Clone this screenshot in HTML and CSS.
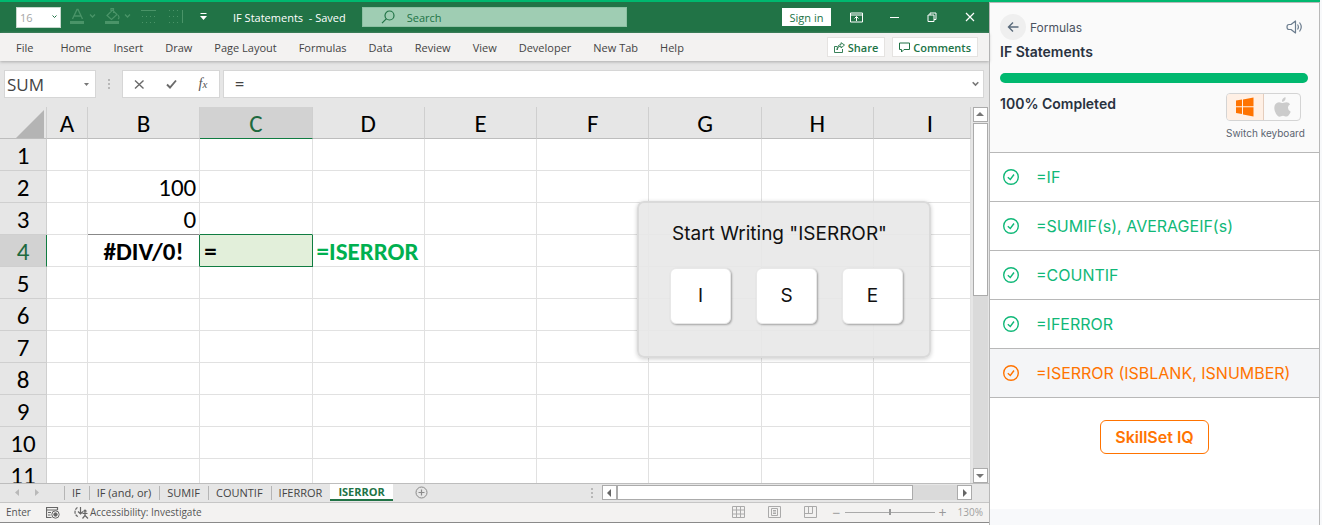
FILE: index.html
```html
<!DOCTYPE html>
<html lang="en">
<head>
<meta charset="utf-8">
<title>IF Statements</title>
<link rel="stylesheet" href="styles.css">
</head>
<body>
<div class="page">
<main class="excel">
  <header class="titlebar">
    <select class="font-size" aria-label="Font size"><option>16</option></select>
    <svg class="quick-tools" width="164" height="20" viewBox="0 0 164 20" fill="none" stroke="#4a9468" aria-hidden="true">
      <path d="M3.500 12 8 2.500h1L13.500 12M5.500 9h6M21 7.500l2.500 2.500L26 7.500M56 7.500l2.500 2.500L61 7.500" stroke-width="1.300"/>
      <path d="M1 15.500h14M36 15.500h14" stroke-width="3"/>
      <path d="M38 8.500 43.500 3 48 7.500 42.500 12.500zM42 5V1.500h2.500V6M49 8q2 3 0 4" stroke-width="1.200"/>
      <path d="M72 3.500h15"/>
      <path d="M73 9.500h14M73 15.500h14M100 3.500h12M100 9.500h12M100 15.500h12" stroke-dasharray="1 3"/>
      <path d="M113.500 3v13"/>
      <path d="M131.500 6.500h6" stroke="#fff"/><path d="M131 9h7l-3.500 4z" fill="#fff" stroke="none"/>
    </svg>
    <h1 class="doc-title">IF Statements&nbsp; - Saved</h1>
    <label class="search">
      <svg width="14" height="14" viewBox="0 0 14 14" fill="none" stroke="#217346" stroke-width="1.200"><circle cx="8.500" cy="5.500" r="4.500"/><path d="M5.500 8.700 1 13.200"/></svg>
      <input type="search" placeholder="Search" aria-label="Search">
    </label>
    <div class="window-tools">
      <button class="sign-in">Sign in</button>
      <button class="win-btn" aria-label="Ribbon display"><svg width="13" height="11" viewBox="0 0 13 11" fill="none" stroke="#fff"><path d="M.5 1h12v9H.5zM.5 3h12M6.500 9V4.500M4.500 6.500l2-2 2 2"/></svg></button>
      <button class="win-btn" aria-label="Minimize"><svg width="11" height="11" viewBox="0 0 11 11" stroke="#fff"><path d="M1 5.500h9"/></svg></button>
      <button class="win-btn" aria-label="Restore"><svg width="10" height="10" viewBox="0 0 10 10" fill="none" stroke="#fff"><path d="M1 3h6v6.500H1zM3 3V1h6v6.500H7"/></svg></button>
      <button class="win-btn" aria-label="Close"><svg width="10" height="10" viewBox="0 0 10 10" stroke="#fff" stroke-width="1.200"><path d="M1 1l8 8M9 1 1 9"/></svg></button>
    </div>
  </header>

  <nav class="ribbon">
    <button class="file">File</button><button>Home</button><button>Insert</button><button>Draw</button><button>Page Layout</button><button>Formulas</button><button>Data</button><button>Review</button><button>View</button><button>Developer</button><button>New Tab</button><button>Help</button>
    <div class="ribbon-actions">
      <button class="action"><svg width="11" height="11" viewBox="0 0 11 11" fill="none" stroke="#217346"><path d="M3 4.500H.5v6h8V7M3 8q.5-4 4-4V6l3.500-3L7 .7V2.500Q3 3 3 8z" stroke-width=".9"/></svg>Share</button>
      <button class="action"><svg width="11" height="11" viewBox="0 0 11 11" fill="none" stroke="#217346"><path d="M.5 1h10v6.500H5L2.500 10V7.500h-2z"/></svg>Comments</button>
    </div>
  </nav>

  <div class="formula-bar">
    <select class="name-box" aria-label="Name box"><option>SUM</option></select>
    <span class="dots" aria-hidden="true"><i></i><i></i><i></i></span>
    <div class="formula-tools">
      <button aria-label="Cancel"><svg width="11" height="11" viewBox="0 0 11 11" stroke="#6a6a6a" stroke-width="1.400"><path d="M1 1.500l8.500 8M9.500 1.500 1 9.500"/></svg></button>
      <button aria-label="Enter"><svg width="11" height="10" viewBox="0 0 11 10" fill="none" stroke="#6a6a6a" stroke-width="1.900"><path d="M1 5.500 4 8.500 10 1.500"/></svg></button>
      <button class="fx" aria-label="Insert function">f<small>x</small></button>
    </div>
    <label class="formula"><input value="=" aria-label="Formula"><svg width="7" height="6" viewBox="0 0 7 6" fill="none" stroke="#777" stroke-width="1.600"><path d="M.7 1.200 3.500 4 6.300 1.200"/></svg></label>
  </div>

  <section class="sheet">
    <div class="grid-wrap">
      <table class="grid">
        <colgroup><col class="col-num"><col class="col-a"><col><col><col><col><col><col><col><col class="col-i"></colgroup>
        <thead><tr><th class="corner"><svg width="28" height="28" viewBox="0 0 28 28"><path d="M28 0v28H0z" fill="#b4b4b4"/></svg></th><th>A</th><th>B</th><th class="active">C</th><th>D</th><th>E</th><th>F</th><th>G</th><th>H</th><th class="cut">I</th></tr></thead>
        <tbody>
          <tr><th>1</th><td></td><td></td><td></td><td></td><td></td><td></td><td></td><td></td><td></td></tr>
          <tr><th>2</th><td></td><td class="num">100</td><td></td><td></td><td></td><td></td><td></td><td></td><td></td></tr>
          <tr><th>3</th><td></td><td class="num ruled">0</td><td class="above"></td><td></td><td></td><td></td><td></td><td></td><td></td></tr>
          <tr><th class="active">4</th><td></td><td class="error">#DIV/0!</td><td class="selected">=</td><td class="hint">=ISERROR</td><td></td><td></td><td></td><td></td><td></td></tr>
          <tr><th>5</th><td></td><td></td><td></td><td></td><td></td><td></td><td></td><td></td><td></td></tr>
          <tr><th>6</th><td></td><td></td><td></td><td></td><td></td><td></td><td></td><td></td><td></td></tr>
          <tr><th>7</th><td></td><td></td><td></td><td></td><td></td><td></td><td></td><td></td><td></td></tr>
          <tr><th>8</th><td></td><td></td><td></td><td></td><td></td><td></td><td></td><td></td><td></td></tr>
          <tr><th>9</th><td></td><td></td><td></td><td></td><td></td><td></td><td></td><td></td><td></td></tr>
          <tr><th>10</th><td></td><td></td><td></td><td></td><td></td><td></td><td></td><td></td><td></td></tr>
          <tr><th>11</th><td></td><td></td><td></td><td></td><td></td><td></td><td></td><td></td><td></td></tr>
        </tbody>
      </table>
    </div>
    <div class="vscroll">
      <button class="arrow" aria-label="Scroll up"><svg width="8" height="5" viewBox="0 0 8 5"><path d="M4 0l4 4H0z" fill="#777"/></svg></button>
      <div class="vtrack"><div class="vthumb"></div></div>
      <button class="arrow" aria-label="Scroll down"><svg width="8" height="5" viewBox="0 0 8 5"><path d="M4 5l4-4H0z" fill="#777"/></svg></button>
    </div>
    <div class="prompt">
      <p>Start Writing "ISERROR"</p>
      <div class="keys"><kbd>I</kbd><kbd>S</kbd><kbd>E</kbd></div>
    </div>
  </section>

  <div class="tabs">
    <svg class="tab-arrows" width="24" height="7" viewBox="0 0 24 7" fill="#b9b9b9"><path d="M4 0v7L0 3.500zM20 0v7l4-3.500z"/></svg>
    <button>IF</button><button>IF (and, or)</button><button>SUMIF</button><button>COUNTIF</button><button>IFERROR</button><button class="current">ISERROR</button>
    <button class="add" aria-label="New sheet"><svg width="13" height="13" viewBox="0 0 13 13" fill="none" stroke="#8a8a8a"><circle cx="6.500" cy="6.500" r="5.500"/><path d="M6.500 3.500v6M3.500 6.500h6" stroke-width="1.200"/></svg></button>
    <div class="hscroll">
      <span class="dots" aria-hidden="true"><i></i><i></i><i></i></span>
      <button class="arrow" aria-label="Scroll left"><svg width="5" height="8" viewBox="0 0 5 8"><path d="M4 0v8L0 4z" fill="#666"/></svg></button>
      <div class="htrack"><div class="hthumb"></div></div>
      <button class="arrow" aria-label="Scroll right"><svg width="5" height="8" viewBox="0 0 5 8"><path d="M1 0v8l4-4z" fill="#666"/></svg></button>
    </div>
  </div>

  <footer class="status">
    <span class="mode">Enter</span>
    <svg width="14" height="13" viewBox="0 0 14 13" fill="none" stroke="#666"><path d="M5.500 11.500H.5v-10h11V4M.5 4h11M2 6.500h3M2 9h2.500" stroke-width="1.200"/><circle cx="9.500" cy="8.500" r="3.700" fill="#f3f2f1"/><circle cx="9.500" cy="8.500" r="1.700" fill="#666"/></svg>
    <svg class="access-icon" width="15" height="13" viewBox="0 0 15 13" fill="none" stroke="#666" stroke-width="1.200"><path d="M3.500 1.500Q1 3 1 6.500 1.500 10 5 11" stroke-dasharray="3 1"/><path d="M6.500 1v6.500M4 5.500l2.500 2.500L9 5.500M8.500 7.500h5M11 7.500v2l-2.500 3M11 9.500l3 3"/><circle cx="11" cy="5.200" r="1"/></svg>
    <span>Accessibility: Investigate</span>
    <div class="views">
      <svg width="13" height="12" viewBox="0 0 13 12" fill="none" stroke="#aaa"><path d="M.5.5h12v11H.5zM.5 4h12M.5 8h12M4.500.5v11M8.500.5v11"/></svg>
      <svg width="13" height="12" viewBox="0 0 13 12" fill="none" stroke="#aaa"><path d="M.5.500h12v11H.5zM3.500 2.500h6v7h-6zM5 4.500h3M5 6h3M5 7.500h3"/></svg>
      <svg width="13" height="12" viewBox="0 0 13 12" fill="none" stroke="#aaa"><path d="M.5.500h12v11H.5zM.5 7.500h8v-7M4.500.500v7"/></svg>
    </div>
    <label class="zoom"><span>−</span><input type="range" aria-label="Zoom"><span>+</span></label>
    <span class="percent">130%</span>
  </footer>
</main>

<aside class="lesson">
  <header class="lesson-head">
    <div class="crumb">
      <a class="back" href="#" aria-label="Back"><svg width="12" height="12" viewBox="0 0 12 12" fill="none" stroke="#5b6b7c" stroke-width="1.400"><path d="M11.500 6H1.500M6 1.500 1.500 6 6 10.500"/></svg></a>
      <span>Formulas</span>
      <button class="sound" aria-label="Sound"><svg width="17" height="14" viewBox="0 0 17 14" fill="none" stroke="#6b7c8e" stroke-width="1.200"><path d="M3 4.500h2L9.500 1v12L5 9.500H3Q1 9.500 1 7t2-2.500zM11.500 4.500q1.800 2.500 0 5M13.500 2.500q3.500 4.500 0 9" stroke-linejoin="round"/></svg></button>
    </div>
    <h2>IF Statements</h2>
    <div class="progress"></div>
    <div class="done-row">
      <h3>100% Completed</h3>
      <div class="switch">
        <div class="os">
          <button class="on" aria-label="Windows"><svg width="18" height="20" viewBox="0 0 18 20" fill="#ff7300"><path d="M0 3.500 6 2.600V9.300H0zM7 2.400 17.500.5V9.300H7zM0 10.300h6V17L0 16zM7 10.300h10.500V19.500L7 17.500z"/></svg></button>
          <button aria-label="Mac"><svg width="17" height="20" viewBox="0 0 17 20" fill="#ccc"><path d="M11.500.200q.4 2.100-.8 3.400T8 4.800Q7.700 2.800 9 1.500T11.500.200zM12.500 5.200q2.300 0 3.600 2-2.300 1.400-2.100 3.800.1 2.700 2.700 3.700-.7 1.900-2 3.600-1 1.300-2.300 1.300-.8 0-1.700-.4-1.700-.8-3.600.1-2 .9-3.300-.4Q1.600 16.800.8 14-.5 9.700 1.500 7 2.900 5.200 5 5.200q1 0 2.200.5 1.200.5 2.300.1 1.700-.6 3-.6z"/></svg></button>
        </div>
        <span>Switch keyboard</span>
      </div>
    </div>
  </header>
  <nav class="topics">
    <a href="#"><svg width="16" height="16" viewBox="0 0 16 16"><circle cx="8" cy="8" r="7.300"/><path d="M4.800 8.200 7.300 10.500 11 5.500"/></svg>=IF</a>
    <a href="#"><svg width="16" height="16" viewBox="0 0 16 16"><circle cx="8" cy="8" r="7.300"/><path d="M4.800 8.200 7.300 10.500 11 5.500"/></svg>=SUMIF(s), AVERAGEIF(s)</a>
    <a href="#"><svg width="16" height="16" viewBox="0 0 16 16"><circle cx="8" cy="8" r="7.300"/><path d="M4.800 8.200 7.300 10.500 11 5.500"/></svg>=COUNTIF</a>
    <a href="#"><svg width="16" height="16" viewBox="0 0 16 16"><circle cx="8" cy="8" r="7.300"/><path d="M4.800 8.200 7.300 10.500 11 5.500"/></svg>=IFERROR</a>
    <a class="here" href="#"><svg width="16" height="16" viewBox="0 0 16 16"><circle cx="8" cy="8" r="7.300"/><path d="M4.800 8.200 7.300 10.500 11 5.500"/></svg>=ISERROR (ISBLANK, ISNUMBER)</a>
  </nav>
  <div class="cta"><button>SkillSet IQ</button></div>
  <div class="foot"></div>
</aside>
</div>
</body>
</html>
```
FILE: styles.css
```css
* { box-sizing: border-box; }
body { margin: 0; background: #f8f9fb; font-family: Inter, sans-serif; }
button, input, select, kbd { font: inherit; color: inherit; margin: 0; padding: 0; border: 0; background: none; border-radius: 0; }
button { display: flex; align-items: center; justify-content: center; white-space: nowrap; }
input, select { min-width: 0; outline: 0; }
h1, h2, h3, p { margin: 0; }
a { text-decoration: none; color: inherit; }
svg { flex: none; display: block; }

.page { display: flex; height: 100vh; margin-right: 2px; border-top: 2px solid #00b86f; }

/* Workbook */
.excel { flex: 1; min-width: 0; display: flex; flex-direction: column; padding-bottom: 2px; background: #fff; font-family: "Open Sans", sans-serif; font-size: 11px; color: #444; }

.titlebar { display: flex; align-items: center; height: 31px; background: #217346; color: #fff; padding: 0 0 1px 16px; }
.font-size { appearance: none; width: 45px; height: 21px; padding-left: 3px; border: 1px solid #c6d8cd; color: #a6a6a6; opacity: 1;
  background: #fff url("data:image/svg+xml,%3Csvg xmlns='http://www.w3.org/2000/svg' width='5' height='4' fill='none' stroke='%23217346'%3E%3Cpath d='M.5.500l2 2 2-2'/%3E%3C/svg%3E") no-repeat right 3px center; }
.quick-tools { margin-left: 8px; }
.doc-title { flex: none; font-size: 11px; font-weight: 400; }
.search { flex: 1; max-width: 265px; height: 20px; margin-left: 16px; padding-left: 18px; display: flex; align-items: center; gap: 12px; background: #9fcdb3; border: 1px solid #8bc0a2; }
.search input { flex: 1; color: #217346; }
.search input::placeholder { color: #217346; opacity: 1; }
.window-tools { display: flex; align-items: center; margin-left: auto; }
.sign-in { width: 49px; height: 18px; background: #fff; color: #217346; margin-right: 6px; }
.win-btn { width: 38px; height: 30px; }

.ribbon { position: relative; z-index: 1; display: flex; align-items: center; gap: 22px; height: 28px; padding: 0 3px 0 16px; background: #f3f2f1; box-shadow: 0 1px 3px #aaa; }
.ribbon .file { margin-right: 5px; }
.ribbon-actions { display: flex; gap: 7px; margin-left: auto; padding-right: 8px; }
.action { height: 20px; gap: 3px; padding: 0 6px; background: #fff; border: 1px solid #e5e3e1; color: #217346; font-weight: 600; }

.formula-bar { display: flex; align-items: center; height: 46px; padding: 0 5px 0 4px; background: #e6e6e6; }
.name-box { appearance: none; width: 92px; height: 28px; padding-left: 2px; border: 1px solid #d6d6d6; font-size: 17px;
  background: #fff url("data:image/svg+xml,%3Csvg xmlns='http://www.w3.org/2000/svg' width='5' height='3' fill='%23777'%3E%3Cpath d='M0 0h5L2.500 3z'/%3E%3C/svg%3E") no-repeat right 6px center; }
.dots { width: 2px; display: flex; flex-direction: column; gap: 2px; margin: 0 12px; }
.dots i { height: 2px; background: #b8b8b8; }
.formula-tools { display: flex; width: 98px; height: 28px; background: #fff; border: 1px solid #d6d6d6; }
.formula-tools button { flex: 1; }
.fx { font: italic 14px "Liberation Serif", serif; color: #555; }
.fx small { font-size: 11px; }
.formula { flex: 1; display: flex; align-items: center; height: 28px; margin-left: 3px; padding: 0 4px 0 11px; background: #fff; border: 1px solid #d6d6d6; }
.formula input { flex: 1; font-size: 16px; font-weight: 600; }

.sheet { position: relative; display: flex; flex: 1; min-height: 0; }
.grid-wrap { flex: 1; min-width: 0; overflow: hidden; }
.grid { width: 100%; table-layout: fixed; border-collapse: separate; border-spacing: 0; font: 25px/29px Carlito, Lato, sans-serif; color: #000; }
.col-num { width: 47px; }
.col-a { width: 41px; }
.col-i { width: 97px; }
.grid th, .grid td { height: 32px; padding: 2px 0 0; border: solid #e1e1e1; border-width: 0 1px 1px 0; white-space: nowrap; }
.grid th { font-weight: 400; background: #e6e6e6; border-color: #cfcfcf; }
.grid thead th { border-bottom-color: #bdbdbd; }
.grid .corner { padding: 2px 2px 0 16px; }
.grid .cut { padding-left: 16px; }
.grid th.active { background: #d2d2d2; color: #1e6a3f; border-bottom-color: #107c41; }
.grid tbody th.active { border-right-color: #107c41; border-bottom-color: #cfcfcf; }
.grid .num { text-align: right; padding-right: 3px; }
.grid .ruled { border-bottom-color: #888; }
.grid .above { border-bottom-color: #107c41; }
.grid .error { text-align: center; font-weight: 700; border-right-color: #107c41; }
.grid .selected { background: #e2efda; border-color: #107c41; font-weight: 700; padding-left: 4px; }
.grid .hint { color: #00b050; font-weight: 700; padding-left: 4px; }

.arrow { flex: none; width: 15px; height: 15px; background: #fff; border: 1px solid #ababab; }
.vscroll { display: flex; flex-direction: column; align-items: center; width: 18px; background: #e6e6e6; }
.vtrack { flex: 1; width: 15px; margin-top: 1px; background: #dadada; }
.vthumb { height: 50%; background: #fff; border: 1px solid #ababab; }

.prompt { position: absolute; top: 94px; right: 58px; width: 294px; height: 157px; padding: 18px 31px 0; background: rgba(232, 232, 232, .9); border: 2px solid #dadada; border-radius: 7px; box-shadow: 0 1px 4px rgba(0, 0, 0, .2); font: 19px/26px Inter, sans-serif; color: #111; }
.prompt p { padding-left: 2px; white-space: nowrap; }
.keys { display: flex; justify-content: space-between; margin: 21px -5px 0 0; }
.keys kbd { width: 61px; height: 56px; background: #fff; border: 1px solid #e8e8e8; border-radius: 6px; box-shadow: 1px 1px 2px rgba(0, 0, 0, .3); font-size: 19px; line-height: 54px; text-align: center; }

.tabs { display: flex; align-items: center; height: 20px; padding: 0 0 1px 15px; background: #e6e6e6; border-top: 1px solid #bdbdbd; border-bottom: 1px solid #c6c6c6; }
.tab-arrows { margin-right: 25px; }
.tabs > button { height: 14px; padding: 0 8px 1px 7px; border-left: 1px solid #b5b5b5; }
.tabs > .current { height: 17px; padding: 0 8px; background: #fff; border: 0; border-bottom: 2px solid #217346; color: #217346; font-weight: 700; }
.tabs > .add { margin-left: 15px; padding-bottom: 0; border: 0; }
.hscroll { display: flex; align-items: center; width: 398px; margin-left: auto; padding-right: 17px; }
.hscroll .dots { margin: 0 9px 0 0; }
.htrack { flex: 1; height: 15px; background: #dadada; }
.hthumb { width: 87%; height: 15px; background: #fff; border: 1px solid #ababab; }

.status { display: flex; align-items: center; height: 20px; padding: 0 6px 1px; background: #f3f2f1; border-bottom: 1px solid #8a8a8a; font-size: 10px; color: #555; }
.mode { margin-right: 15px; }
.access-icon { margin: 0 1px 0 14px; }
.views { display: flex; gap: 23px; margin-left: auto; }
.zoom { display: flex; align-items: center; gap: 4px; margin-left: 16px; color: #999; font-size: 14px; }
.zoom input { appearance: none; width: 90px; height: 1px; background: #aaa; }
.zoom input::-webkit-slider-thumb { appearance: none; width: 2px; height: 6px; background: #999; }
.percent { margin-left: 11px; color: #a0a0a0; }

/* Lesson panel */
.lesson { flex: none; width: 331px; display: flex; flex-direction: column; background: #fff; border: solid #b8b8b8; border-width: 1px 1px 0; color: #29323f; }
.lesson-head { height: 150px; padding: 11px 11px 0 10px; background: #fafafa; border-bottom: 1px solid #b8b8b8; }
.crumb { display: flex; align-items: center; gap: 4px; font-size: 12px; color: #4a5361; }
.back { display: flex; align-items: center; justify-content: center; width: 26px; height: 26px; border-radius: 50%; background: #efefef; }
.sound { margin: 0 5px 0 auto; }
.lesson h2, .lesson h3 { font-size: 14px; line-height: 20px; font-weight: 600; }
.lesson h2 { margin-top: 2px; }
.progress { height: 10px; margin-top: 11px; border-radius: 5px; background: #00b86f; }
.done-row { display: flex; justify-content: space-between; margin-top: 10px; }
.done-row h3 { padding-top: 1px; }
.switch { width: 82px; font-size: 10px; line-height: 14px; color: #5b6470; white-space: nowrap; }
.os { display: flex; width: 75px; height: 28px; margin-bottom: 5px; border: 1px solid #d4d4d4; border-radius: 4px; overflow: hidden; }
.os button { flex: 1; }
.os .on { background: #fff0e5; border-right: 1px solid #e5cdbd; }
.topics a { display: flex; align-items: center; gap: 17px; height: 49px; padding-left: 13px; border-bottom: 1px solid #b8b8b8; font-size: 16px; color: #10b878; }
.topics svg { fill: none; stroke: currentColor; stroke-width: 1.400; }
.topics .here { background: #f4f5f7; color: #ff7300; }
.cta { flex: 1; display: flex; justify-content: center; align-items: flex-start; padding-top: 22px; }
.cta button { width: 109px; height: 34px; border: 1px solid #ff7300; border-radius: 6px; color: #ff7300; font-size: 16px; font-weight: 600; }
.foot { height: 16px; background: #f8f9fb; }
```
